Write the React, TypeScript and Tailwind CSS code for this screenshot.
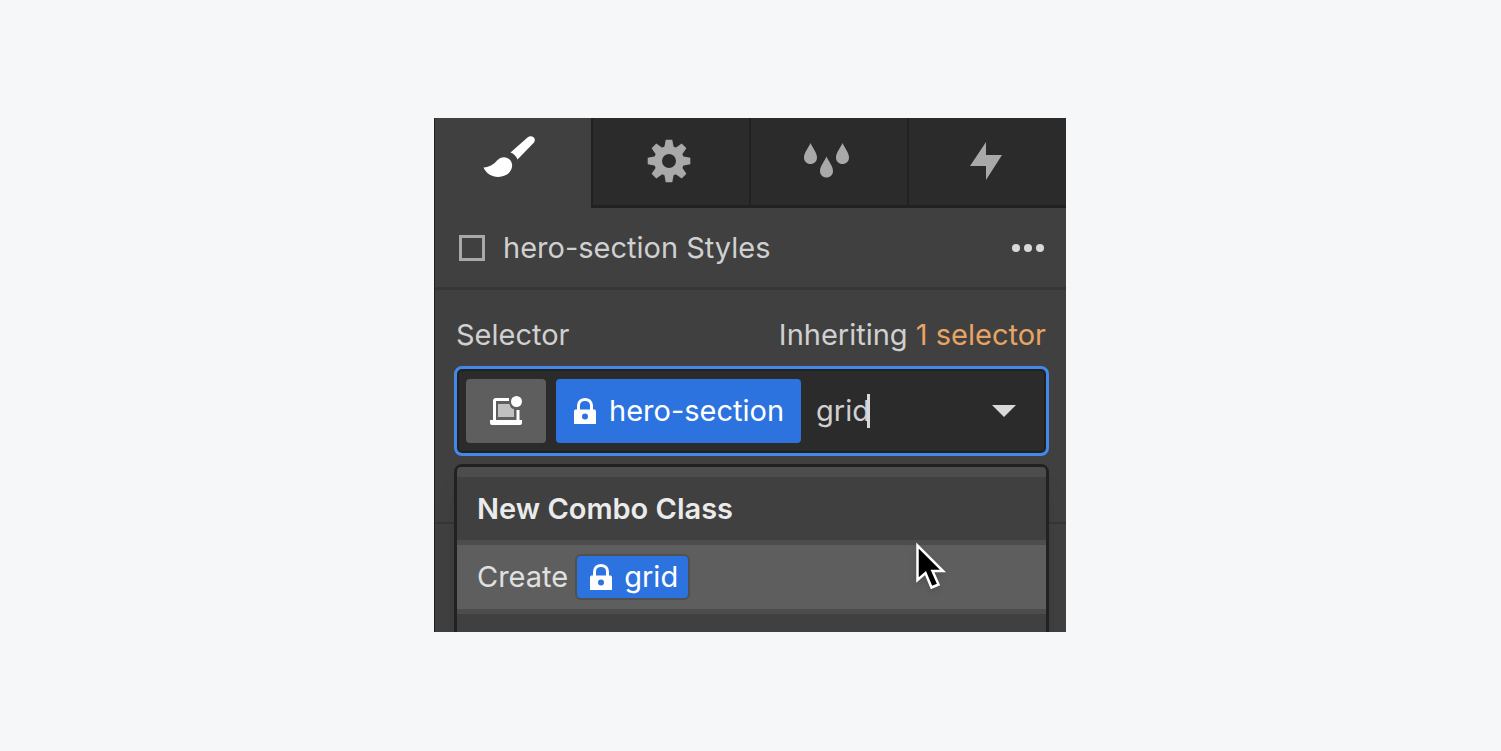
import { useState, type ReactNode } from "react";
import clsx from "clsx";

interface IconProps {
  className?: string;
}

function BrushIcon({ className }: IconProps) {
  return (
    <svg className={className} viewBox="0 0 52 42" fill="currentColor" aria-hidden="true">
      <path d="M44.500 1.500C48 -1.500 54 1.500 51 6.500L34.500 23.500C33.500 20.500 30.500 17.500 27.500 16.500Z" />
      <path d="M0.500 31.500C7 31 10.500 28.500 14 24.500C18 20 24 20 27.500 24.500C31 29.500 28.500 35.500 24 38.500C15 43.500 4.500 40.500 0.500 31.500Z" />
    </svg>
  );
}

function GearIcon({ className }: IconProps) {
  return (
    <svg className={className} viewBox="-22 -22 44 44" aria-hidden="true">
      <circle r="11" fill="none" stroke="currentColor" strokeWidth="8" />
      <g fill="currentColor">
        {[0, 45, 90, 135, 180, 225, 270, 315].map((angle) => (
          <path key={angle} d="M-5 -12L-3.300 -21.300H3.300L5 -12Z" transform={`rotate(${angle})`} />
        ))}
      </g>
    </svg>
  );
}

function DropsIcon({ className }: IconProps) {
  const drop = "M6.500 0C8 4 13 9.500 13 14.500C13 18.500 10 21 6.500 21C3 21 0 18.500 0 14.500C0 9.500 5 4 6.500 0Z";
  return (
    <svg className={className} viewBox="0 0 46 35" fill="currentColor" aria-hidden="true">
      <path d={drop} />
      <path d={drop} transform="translate(16 13.500)" />
      <path d={drop} transform="translate(32 0)" />
    </svg>
  );
}

function BoltIcon({ className }: IconProps) {
  return (
    <svg className={className} viewBox="0 0 32 38" fill="currentColor" aria-hidden="true">
      <path d="M16 0V13H32L16 38V24H0Z" />
    </svg>
  );
}

function LockIcon({ className }: IconProps) {
  return (
    <svg className={className} viewBox="0 0 22 26" aria-hidden="true">
      <path d="M4.500 13V7.500C4.500 -0.500 17.500 -0.500 17.500 7.500V13" fill="none" stroke="currentColor" strokeWidth="3" />
      <path
        d="M1 11.500H21L22 13V26H0V13ZM11 15.500A3 3 0 1 0 11 21.500A3 3 0 1 0 11 15.500Z"
        fill="currentColor"
        fillRule="evenodd"
      />
    </svg>
  );
}

function DeviceIcon({ className }: IconProps) {
  return (
    <svg className={className} viewBox="0 0 32 30" aria-hidden="true">
      <path d="M8 8H19.500C20 11 22 13 24 13V21H8Z" fill="#c0c0c0" />
      <path d="M4.500 24V5Q4.500 3.500 6 3.500H19M28 14V24" fill="none" stroke="#fff" strokeWidth="3" />
      <path d="M0 24H32V27Q32 29 30 29H2Q0 29 0 27Z" fill="#fff" />
      <circle cx="26.500" cy="5.500" r="5.500" fill="#fff" />
    </svg>
  );
}

function PointerIcon({ className }: IconProps) {
  return (
    <svg className={className} viewBox="0 0 32 50" aria-hidden="true">
      <path
        d="M1.500 3.500V38L9.500 31L15.500 45.500L22.500 42.500L16.500 29H27Z"
        fill="#000"
        stroke="#fff"
        strokeWidth="2.500"
      />
    </svg>
  );
}

const tabs: { id: string; label: string; icon: ReactNode }[] = [
  { id: "style", label: "Style", icon: <BrushIcon className="w-13 h-10.5 mr-2 mb-2" /> },
  { id: "settings", label: "Settings", icon: <GearIcon className="size-11" /> },
  { id: "manager", label: "Style manager", icon: <DropsIcon className="w-[46px] h-[35px]" /> },
  { id: "interactions", label: "Interactions", icon: <BoltIcon className="w-8 h-[38px]" /> },
];

function PanelTabs() {
  const [active, setActive] = useState("style");

  return (
    <div role="tablist" className="grid grid-cols-[156fr_158fr_158fr_159fr] h-[90px]">
      {tabs.map((tab) => (
        <button
          key={tab.id}
          type="button"
          role="tab"
          aria-label={tab.label}
          aria-selected={active === tab.id}
          onClick={() => setActive(tab.id)}
          className={clsx(
            "flex items-center justify-center",
            active === tab.id
              ? "bg-[#404040] pb-1 text-white"
              : "border-b-3 border-l-2 border-[#212121] bg-[#2b2b2b] pr-1 pb-0.5 text-[#a9a9a9]",
          )}
        >
          {tab.icon}
        </button>
      ))}
    </div>
  );
}

function ClassMenu({ name }: { name: string }) {
  return (
    <div className="absolute top-full left-0 right-0 mt-2 rounded-t-lg border-3 border-[#212121] bg-[#404040] shadow-xl">
      <div className="h-2.5 rounded-t-sm bg-[#4d4d4d]" />
      <h3 className="flex items-center h-[63px] px-5 font-semibold text-[#ebebeb]">New Combo Class</h3>
      <button
        type="button"
        className="flex items-center w-full h-[74px] px-5 gap-[9px] border-y-5 border-[#4d4d4d] bg-[#5e5e5e] text-[#e0e0e0]"
      >
        Create
        <span className="flex items-center h-[42px] pl-[13px] pr-2.5 gap-3 rounded-sm bg-[#2c73df] text-white ring-2 ring-[#505050]">
          <LockIcon className="w-[22px] h-[26px]" />
          {name}
        </span>
      </button>
      <div className="h-10" />
      <PointerIcon className="absolute top-[75px] right-[98px] w-8 h-[50px] drop-shadow-md" />
    </div>
  );
}

function SelectorField() {
  const [value, setValue] = useState("grid");

  return (
    <section className="pt-[27px] pb-[66px] pl-[19px] pr-[17px] border-b-2 border-[#363636]">
      <div className="flex items-center justify-between h-9 mb-[13px] pl-0.5 pr-[3px]">
        <label htmlFor="selector">Selector</label>
        <p>
          Inheriting <a href="#inherited" className="text-[#e8a465]">1 selector</a>
        </p>
      </div>
      <div className="relative">
        <div className="flex items-center h-[90px] pl-[9px] pr-[30px] rounded-lg border-3 border-[#4389ea] bg-[#2b2b2b] inset-ring-2 inset-ring-[#212121]">
          <button
            type="button"
            aria-label="Breakpoint"
            className="flex items-center justify-center w-20 h-16 mr-2.5 rounded-sm bg-[#5e5e5e]"
          >
            <DeviceIcon className="w-8 h-[30px]" />
          </button>
          <button type="button" className="flex items-center h-16 pl-[18px] pr-[17px] gap-[13px] mr-[15px] rounded-sm bg-[#2c73df] text-white">
            <LockIcon className="w-[22px] h-[26px]" />
            hero-section
          </button>
          <input
            id="selector"
            type="text"
            value={value}
            onChange={(e) => setValue(e.target.value)}
            className="field-sizing-content min-w-0 bg-transparent outline-none"
          />
          <span className="w-[3px] h-[34px] -ml-[3px] bg-[#d9d9d9]" />
          <button type="button" aria-label="Show classes" className="ml-auto text-[#d9d9d9]">
            <svg className="w-6 h-3" viewBox="0 0 24 12" fill="currentColor" aria-hidden="true">
              <path d="M0 0H24L12 12Z" />
            </svg>
          </button>
        </div>
        <ClassMenu name={value} />
      </div>
    </section>
  );
}

export default function App() {
  return (
    <main className="flex items-center justify-center min-h-screen pr-px pb-px bg-[#f6f7f9] font-['Inter',sans-serif] text-[29px] leading-9">
      <div className="w-full max-w-[632px] overflow-hidden border-l border-[#212121] bg-[#404040] text-[#d0d0d0]">
        <PanelTabs />
        <header className="flex items-center justify-between h-[82px] pl-6 pr-[22px] border-b-3 border-[#363636]">
          <label className="flex items-center gap-[18px]">
            <input type="checkbox" className="appearance-none size-[26px] border-3 border-[#a9a9a9]" />
            hero-section Styles
          </label>
          <button type="button" aria-label="More options" className="flex gap-1 text-[#d9d9d9]">
            <span className="size-2 rounded-full bg-current" />
            <span className="size-2 rounded-full bg-current" />
            <span className="size-2 rounded-full bg-current" />
          </button>
        </header>
        <SelectorField />
        <div className="h-[108px]" />
      </div>
    </main>
  );
}
